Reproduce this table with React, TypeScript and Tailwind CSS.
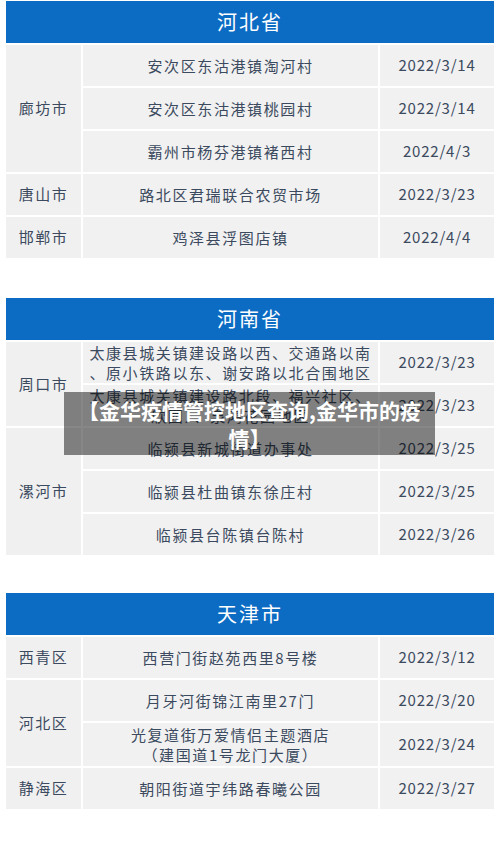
import React from "react";

type Row = { addr: React.ReactNode; date: string; h?: string };
type Group = { city: string; rows: Row[] };
type Table = { title: string; groups: Group[] };

const tables: Table[] = [
  {
    title: "河北省",
    groups: [
      {
        city: "廊坊市",
        rows: [
          { addr: "安次区东沽港镇淘河村", date: "2022/3/14" },
          { addr: "安次区东沽港镇桃园村", date: "2022/3/14" },
          { addr: "霸州市杨芬港镇褚西村", date: "2022/4/3" },
        ],
      },
      { city: "唐山市", rows: [{ addr: "路北区君瑞联合农贸市场", date: "2022/3/23" }] },
      { city: "邯郸市", rows: [{ addr: "鸡泽县浮图店镇", date: "2022/4/4" }] },
    ],
  },
  {
    title: "河南省",
    groups: [
      {
        city: "周口市",
        rows: [
          {
            addr: (
              <>
                太康县城关镇建设路以西、交通路以南
                <br />
                、原小铁路以东、谢安路以北合围地区
              </>
            ),
            date: "2022/3/23",
          },
          {
            addr: (
              <>
                太康县城关镇建设路北段、福兴社区、
                <br />
                欣园）、泉鸿花园地区
              </>
            ),
            date: "2022/3/23",
          },
        ],
      },
      {
        city: "漯河市",
        rows: [
          { addr: "临颍县新城街道办事处", date: "2022/3/25" },
          { addr: "临颍县杜曲镇东徐庄村", date: "2022/3/25" },
          { addr: "临颍县台陈镇台陈村", date: "2022/3/26" },
        ],
      },
    ],
  },
  {
    title: "天津市",
    groups: [
      { city: "西青区", rows: [{ addr: "西营门街赵苑西里8号楼", date: "2022/3/12" }] },
      {
        city: "河北区",
        rows: [
          { addr: "月牙河街锦江南里27门", date: "2022/3/20" },
          {
            addr: (
              <>
                光复道街万爱情侣主题酒店
                <br />
                （建国道1号龙门大厦）
              </>
            ),
            date: "2022/3/24",
            h: "min-h-[43px]",
          },
        ],
      },
      { city: "静海区", rows: [{ addr: "朝阳街道宇纬路春曦公园", date: "2022/3/27" }] },
    ],
  },
];

const spanClass: Record<number, string> = {
  1: "row-span-1",
  2: "row-span-2",
  3: "row-span-3",
};

function DataTable({ t }: { t: Table }) {
  return (
    <div className="grid grid-cols-[75px_295px_1fr] gap-[2px] bg-white">
      <div className="col-span-3 h-[42px] bg-[#0c6cc4] flex items-center justify-center text-white text-[20px] tracking-[2px]">
        {t.title}
      </div>
      {t.groups.map((g, gi) => (
        <React.Fragment key={gi}>
          <div
            className={`${spanClass[g.rows.length]} bg-[#f0f0f0] flex items-center justify-center text-[15px] tracking-[1.5px] text-[#3b4a5e]`}
            style={{ gridRow: `span ${g.rows.length} / span ${g.rows.length}` }}
          >
            {g.city}
          </div>
          {g.rows.map((r, ri) => (
            <React.Fragment key={ri}>
              <div
                className={`${r.h ?? "min-h-[41px]"} bg-[#f1f1f1] flex items-center justify-center text-center text-[15px] leading-[20px] tracking-[1.6px] text-[#3b4a5e]`}
                style={{ gridColumnStart: 2 }}
              >
                <div>{r.addr}</div>
              </div>
              <div className="bg-[#f1f1f1] flex items-center justify-center text-[15px] tracking-[0.8px] text-[#3b4a5e]">
                {r.date}
              </div>
            </React.Fragment>
          ))}
        </React.Fragment>
      ))}
    </div>
  );
}

export default function App() {
  return (
    <div
      className="relative h-[847px] w-[500px] bg-white overflow-hidden"
      style={{ fontFamily: '"Noto Sans CJK SC", "Noto Sans", sans-serif' }}
    >
      <div className="flex flex-col px-[6px] pt-[1px] w-[500px]">
        <DataTable t={tables[0]} />
        <div className="h-[40px]" />
        <DataTable t={tables[1]} />
        <div className="h-[38px]" />
        <DataTable t={tables[2]} />
      </div>
      <div className="absolute top-[392px] left-[64px] w-[371px] h-[63px] bg-[rgba(0,0,0,0.47)] flex items-center justify-center px-[2px]">
        <div className="text-white font-bold text-[21px] leading-[28px] text-center">
          【金华疫情管控地区查询,金华市的疫情】
        </div>
      </div>
    </div>
  );
}
